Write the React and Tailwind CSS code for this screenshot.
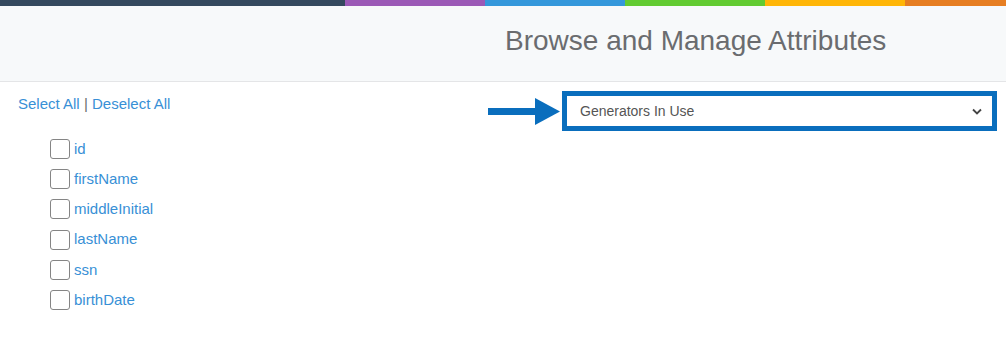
import React from 'react';

const fields = ['id', 'firstName', 'middleInitial', 'lastName', 'ssn', 'birthDate'];

export default function App() {
  return (
    <div className="w-[1006px] h-[346px] bg-white font-['Liberation_Sans',Arial,sans-serif]">
      <div className="flex h-[6px]">
        <div className="w-[345px] bg-[#34495e]" />
        <div className="w-[140px] bg-[#9b59b6]" />
        <div className="w-[140px] bg-[#3498db]" />
        <div className="w-[140px] bg-[#62cb31]" />
        <div className="w-[140px] bg-[#ffb606]" />
        <div className="flex-1 bg-[#e67e22]" />
      </div>
      <div className="h-[76px] bg-[#f7f9fa] border-b border-[#e4e5e7] grid grid-cols-2">
        <div />
        <h1 className="pl-[2px] pt-[19px] text-[28px] leading-[32px] text-[#6a6c6f]">
          Browse and Manage Attributes
        </h1>
      </div>
      <div className="flex">
        <div className="w-[480px] pl-[18px] pt-[13px]">
          <div className="text-[15px] leading-[18px] text-[#3890d6]">
            <a>Select All</a> <span className="text-[#6a6c6f]">|</span> <a>Deselect All</a>
          </div>
          <div className="pl-[32px] pt-[26px] flex flex-col gap-[10.2px]">
            {fields.map((f) => (
              <label key={f} className="flex items-center h-[20px] gap-[4px] text-[15px] text-[#3890d6]">
                <span className="w-[20px] h-[20px] rounded-[3px] border border-[#858585] bg-white" />
                {f}
              </label>
            ))}
          </div>
        </div>
        <div className="flex items-start pt-[9px]">
          <svg width="74" height="30" viewBox="0 0 74 30" className="mt-[5px] ml-[8px]">
            <rect x="0" y="12" width="50" height="7" fill="#0a6ebd" />
            <polygon points="47,2 72,15.5 47,29" fill="#0a6ebd" />
          </svg>
          <div className="w-[435px] h-[40px] border-[5px] border-[#0a6ebd] bg-white flex items-center justify-between pl-[13px] pr-[9px]">
            <span className="text-[14px] text-[#555]">Generators In Use</span>
            <svg width="12" height="12" viewBox="0 0 12 12">
              <path d="M2 4.5 L6 8.5 L10 4.5" fill="none" stroke="#444" strokeWidth="1.8" />
            </svg>
          </div>
        </div>
      </div>
    </div>
  );
}
